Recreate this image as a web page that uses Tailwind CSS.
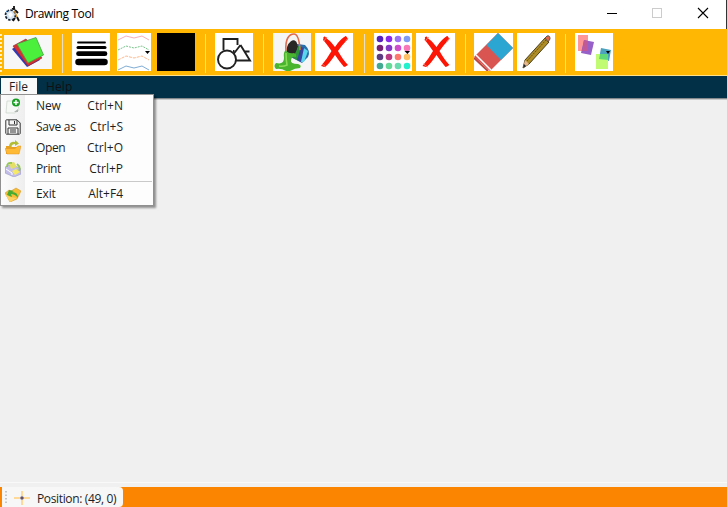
<!DOCTYPE html>
<html lang="en">
<head>
<meta charset="utf-8">
<title>Drawing Tool</title>
<script src="https://cdn.jsdelivr.net/npm/@tailwindcss/browser@4"></script>
</head>
<body class="w-[727px] h-[507px] overflow-hidden bg-[#f0f0f0] font-['Open_Sans','Noto_Sans',sans-serif] text-[12px] text-[#1e1e1e]">
<svg class="hidden">
  <symbol id="cross" viewBox="0 0 38 38">
    <path d="M9 4Q14 6 20 14Q25 6 31 3L33 6Q27 12 23 18Q28 27 33 32L29 34Q24 28 20 22Q14 31 10 34L6 33Q12 26 16.500 18Q11 10 8 7Z" fill="#fc1505"/>
    <path d="M9 4L18 15M31 4L22 14M8 33L17 22M31 33L22 22" stroke="#fc1505" stroke-width="2" fill="none"/>
    <path d="M12 4L9 8M33 5L30 9M7 31L11 34" stroke="#ff7468" stroke-width="1" fill="none"/>
  </symbol>
</svg>
<div class="flex flex-col w-full h-full">
  <header class="flex items-center h-[29px] shrink-0 bg-white border-r border-[#333]">
    <svg class="w-4 h-[18px] ml-[4px] mb-[2px]" viewBox="0 0 16 18" fill="none">
      <circle cx="6.500" cy="10" r="5" fill="#d5e4f1" stroke="#172536" stroke-width="1.700" stroke-dasharray="2.500 1.300"/>
      <path d="M4 9L7 7L9 10L6 13Z" fill="#fff"/>
      <path d="M10 1V5M11 5L14 8M13 12L15 16M8 4L11 3M11 13L9 16" stroke="#111" stroke-width="1.800"/>
      <path d="M10.500 6L13 12" stroke="#d59330" stroke-width="1.500"/><path d="M1 8L4 5" stroke="#4385c5"/>
    </svg>
    <span class="ml-[5px] w-[80px] whitespace-nowrap text-black tracking-[-0.4px] leading-4 mb-[2px]">Drawing Tool</span>
    <svg class="ml-auto mr-[16px] w-[104px] h-[12px] mb-[3px]" viewBox="0 0 104 12" fill="none">
      <path d="M1 6.500H11" stroke="#000"/><rect x="46.500" y="1.500" width="9" height="9" stroke="#ccc"/>
      <path d="M92 1L102 11M102 1L92 11" stroke="#000" stroke-width="1.100"/>
    </svg>
  </header>

  <div class="flex items-start h-[47px] shrink-0 bg-[#ffb703] border-b border-[#ffe08a] pt-1 overflow-hidden">
    <svg class="w-[2px] h-[38px] mt-px shrink-0" viewBox="0 0 2 38"><path d="M1 0V38" stroke="#fff0c8" stroke-width="2" stroke-dasharray="2 2"/></svg>
    <svg class="ml-[2px] mt-[2px] w-12 h-[34px] shrink-0 bg-[#f7f7f7]" viewBox="0 0 48 34">
      <path d="M8 14L20 6L36 25L23 32Z" fill="#3039b8"/><path d="M9 11L22 4L38 23L24 31Z" fill="#d83030" stroke="#932929" stroke-width=".6"/>
      <path d="M13 9L32 2.500L39.500 20L24 28Z" fill="#4af03b" stroke="#4a9d46" stroke-width=".8"/>
    </svg>
    <i class="ml-[10px] mt-px w-px h-[39px] shrink-0 bg-[#e9dfc4]"></i>
    <svg class="ml-[9px] w-[38px] h-[38px] shrink-0 bg-white" viewBox="0 0 38 38" stroke="#000" stroke-linecap="round">
      <path d="M6 9.500H33" stroke-width="1.800"/><path d="M6 14.500H33" stroke-width="3"/><path d="M6.500 20.700H33" stroke-width="4.700"/><path d="M6.500 29H32.500" stroke-width="6.500"/>
    </svg>
    <svg class="ml-[7px] w-[34px] h-[38px] shrink-0 bg-white" viewBox="0 0 34 38" fill="none" stroke-width="1">
      <path d="M1 7L9 3L17 5L25 3L32 7" stroke="#f8aebb"/><path d="M1 17L9 13L17 15L25 13L32 17" stroke="#7ac48b" stroke-dasharray="2 1"/><path d="M1 27L9 23L17 25L25 23L32 27" stroke="#ffb98d" stroke-dasharray="3 1"/><path d="M1 37L9 33L17 35L25 33L32 37" stroke="#80add4"/>
      <path d="M28 18H33L30.500 21Z" fill="#000"/>
    </svg>
    <i class="ml-[6px] w-[38px] h-[38px] shrink-0 bg-black"></i>
    <i class="ml-[10px] mt-px w-px h-[39px] shrink-0 bg-[#e9dfc4]"></i>
    <svg class="ml-[9px] w-[38px] h-[38px] shrink-0 bg-white" viewBox="0 0 38 38" fill="none" stroke="#202020" stroke-width="1.900">
      <path d="M8.500 17V6H22.500V12M19.500 18H18"/><circle cx="12" cy="26.500" r="9"/><path d="M25.500 12L35 27.500H21M25.500 12L18.500 21M30 18.500H34.500"/>
    </svg>
    <i class="ml-[10px] mt-px w-px h-[39px] shrink-0 bg-[#e9dfc4]"></i>
    <svg class="ml-[9px] w-[38px] h-[38px] shrink-0 bg-[#f5f5f5]" viewBox="0 0 38 38">
      <path d="M17 10L32 12Q38 18 35 24L29 30L14 22Z" fill="#286fa9"/><path d="M21 12L25 13L21 25L16 22Z" fill="#1b2733"/><path d="M25 13L29 14L24 27L20 25Z" fill="#2b9438"/><path d="M28 14L32 15L28 29L24 27Z" fill="#37459d"/><path d="M31 15L35 18L31 29L28 29Z" fill="#57d6ee"/>
      <ellipse cx="19" cy="15" rx="5" ry="8" transform="rotate(20 19 15)" fill="#292626"/>
      <path d="M13 18C12 6 16 1 21 1Q26 1 27 17" fill="none" stroke="#e06a4d" stroke-width="1.600"/>
      <path d="M13 17Q15 21 21 20Q24 21 23 24Q19 23 18 27Q17 31 25 31Q29 32 27 35Q22 35 17 38H13Q8 35 3 36Q0 33 3 30Q11 32 11 25Q10 19 13 17Z" fill="#49b42d"/><path d="M13 20Q13 27 14 32Q10 34 6 33" stroke="#8bdd58" fill="none" stroke-width="1.500"/>
    </svg>
    <svg class="ml-[4px] w-[38px] h-[38px] shrink-0 bg-white"><use href="#cross"/></svg>
    <i class="ml-[11px] mt-px w-px h-[39px] shrink-0 bg-[#e9dfc4]"></i>
    <svg class="ml-[9px] w-[38px] h-[38px] shrink-0 bg-white" viewBox="0 0 38 38">
      <circle cx="6" cy="6" r="3.300" fill="#5520be"/><circle cx="15" cy="6" r="3.300" fill="#8928ed"/><circle cx="24" cy="6" r="3.300" fill="#9c72f4"/><circle cx="33" cy="6" r="3.300" fill="#819cf5"/>
      <circle cx="6" cy="15" r="3.300" fill="#762176"/><circle cx="15" cy="15" r="3.300" fill="#8338c8"/><circle cx="24" cy="15" r="3.300" fill="#cf4ccc"/><circle cx="33" cy="15" r="3.300" fill="#fa77ba"/>
      <circle cx="6" cy="24" r="3.300" fill="#5b3d80"/><circle cx="15" cy="24" r="3.300" fill="#ba3a83"/><circle cx="24" cy="24" r="3.300" fill="#ff786e"/><circle cx="33" cy="24" r="3.300" fill="#ffc064"/>
      <circle cx="6" cy="33" r="3.300" fill="#43a991"/><circle cx="15" cy="33" r="3.300" fill="#65da96"/><circle cx="24" cy="33" r="3.300" fill="#68dcae"/><circle cx="33" cy="33" r="3.300" fill="#22f1cd"/>
      <path d="M30.500 18H36L33.500 21Z" fill="#000"/>
    </svg>
    <svg class="ml-[4px] w-[39px] h-[38px] shrink-0 bg-white"><use href="#cross"/></svg>
    <i class="ml-[10px] mt-px w-px h-[39px] shrink-0 bg-[#e9dfc4]"></i>
    <svg class="ml-[8px] w-[39px] h-[38px] shrink-0 bg-white" viewBox="0 0 39 38">
      <path d="M0 24L24 0L39 15L16 38Z" fill="#d95551"/><path d="M12.500 12L24 0L39 15L27 27Z" fill="#2ba6d3"/><path d="M2 22L17 37" stroke="#fff" stroke-width="1.500"/><path d="M0 25L14 38" stroke="#bd463f" stroke-width="2"/>
    </svg>
    <svg class="ml-[4px] w-[38px] h-[38px] shrink-0 bg-white" viewBox="0 0 38 38">
      <path d="M8 27L28 5L32 9L12 31L6 35Z" fill="#ae8d25" stroke="#4b4025" stroke-width="1"/><path d="M10 28L29 7" stroke="#69511a" stroke-width="1" stroke-dasharray="2 1"/><path d="M8 27L12 31L6 35Z" fill="#e7b88e"/><path d="M7 31L9 33L6 35Z" fill="#222"/><path d="M28 5L30 3Q33 2 33 6L31 9Z" fill="#df654b" stroke="#5a554c"/>
    </svg>
    <i class="ml-[10px] mt-px w-px h-[39px] shrink-0 bg-[#e9dfc4]"></i>
    <svg class="ml-[9px] w-[38px] h-[38px] shrink-0 bg-white" viewBox="0 0 38 38">
      <path d="M3 2H13V18H3Z" fill="#ff9797"/><path d="M9 7L19 9L16 22L6 20Z" fill="#9660c8"/><path d="M9 7L13 8V18H7Z" fill="#c05995"/><path d="M26 15L36 17L34 28L24 26Z" fill="#4ba2be"/><path d="M21 21H33V36H21Z" fill="#c0fb73"/><path d="M25 21H33V27L24 26Z" fill="#60da79"/><path d="M31 18H35L33 21Z" fill="#000"/>
    </svg>
  </div>

  <nav class="relative z-10 flex items-start h-[22px] shrink-0 bg-[#023047] shadow-[0_1px_0_#83898d,0_2px_0_#c9c9c9]">
    <div class="ml-px mt-[2px] w-[36px] h-[20px] bg-[#f9f9f9] pl-2 leading-[18px]">File</div>
    <div class="ml-[9px] mt-[2px] w-[32px] leading-[18px] tracking-[.1px] text-[#101010]">Help</div>
    <div class="absolute left-0 top-[18px] w-[154px] h-[112px] flex bg-[#fdfdfd] border border-[#909090] shadow-[2px_2px_2px_#0006]">
      <div class="w-6 shrink-0 flex flex-col items-center bg-gradient-to-r from-[#fcfcfc] to-[#eee] pt-[3px]">
        <svg class="w-4 h-4 shrink-0" viewBox="0 0 16 16"><path d="M2 3H12L14 12L10 15H1Z" fill="#f6f8f5" stroke="#c9d2c9" stroke-width=".7"/><path d="M9 14L13 11V14Z" fill="#adb5b0"/><circle cx="11" cy="4.500" r="4" fill="#169c20"/><path d="M8.500 4.500H13.500M11 2V7" stroke="#fff" stroke-width="1.400"/></svg>
        <svg class="mt-[5px] w-4 h-4 shrink-0" viewBox="0 0 16 16" fill="none" stroke="#333"><path d="M.8 1.500Q.8.8 1.500.8H12L15.200 4V14.500L14.500 15.200H1.500L.8 14.500ZM4 1V6H12V1M9.500 2V5M3 15V9H13V15M5 11H11M5 13H11"/></svg>
        <svg class="mt-[5px] w-4 h-4 shrink-0" viewBox="0 0 16 16"><path d="M1 6H6L7 7H14V14H1Z" fill="#e8a020"/><path d="M4 6Q5 1 10 2V0L14 3.500L10 6V4Q7 4 6 7" fill="#b2bd35"/><path d="M0 8.500H10L13 6H16L14 14H2Z" fill="#ffba35" stroke="#dc9125" stroke-width=".5"/></svg>
        <svg class="mt-[5px] w-4 h-4 shrink-0" viewBox="0 0 16 16"><path d="M0 6L7 3L16 8V13L9 16L0 12Z" fill="#c2bee9" stroke="#9a98c9" stroke-width=".6"/><path d="M4 2L9 1L12 6L6 8Z" fill="#e4df65"/><path d="M2 6Q2 1 7 2M12 3Q16 6 14 10" fill="none" stroke="#93c653" stroke-width="1.800"/><path d="M7 10L11 8L15 11L10 14Z" fill="#f6e965"/><path d="M1 8L7 12V14" stroke="#fff" fill="none"/></svg>
        <svg class="mt-[9px] w-4 h-4 shrink-0" viewBox="0 0 16 16"><path d="M0 7L4 4L6 5L11 2L16 5L12 13L5 16Z" fill="#f6bd35" stroke="#ce9027" stroke-width=".5"/><path d="M2 9L4 4L9 5L7 6Q13 6 13 12Q10 8 6 8L7 11Z" fill="#45ab32"/><path d="M0 8L5 11L12 12L5 16Z" fill="#ffd363"/></svg>
      </div>
      <div class="flex-1 pl-[11px] tracking-[-.12px] leading-[21px]">
        <div class="flex justify-between pr-[30px] h-[21px]"><span>New</span><span class="tracking-normal">Ctrl+N</span></div>
        <div class="flex justify-between pr-[30px] h-[21px]"><span class="tracking-[-.25px]">Save as</span><span class="tracking-normal">Ctrl+S</span></div>
        <div class="flex justify-between pr-[30px] h-[21px]"><span class="tracking-[-.35px]">Open</span><span class="tracking-normal">Ctrl+O</span></div>
        <div class="flex justify-between pr-[30px] h-[21px]"><span class="tracking-[-.35px]">Print</span><span class="tracking-normal">Ctrl+P</span></div>
        <div class="h-px bg-[#c9c9c9] mt-[2px] mb-px -ml-[3px] mr-px"></div>
        <div class="flex justify-between pr-[30px] h-[21px]"><span>Exit</span><span class="tracking-normal">Alt+F4</span></div>
      </div>
    </div>
  </nav>
  <main class="flex-1 bg-[#f0f0f0]"></main>
  <footer class="h-[25px] shrink-0 border-t border-[#f9f9f9] bg-[#f0f0f0] pt-[4px]">
    <div class="h-[20px] bg-[#fb8500] pl-[2px]">
      <div class="w-[121px] h-full flex items-center bg-[#f7f7f7] rounded-r-sm">
        <svg class="ml-[3px] w-[2px] h-[14px]" viewBox="0 0 2 14"><path d="M1 1V14" stroke="#b5b5b5" stroke-width="1.500" stroke-dasharray="1.500 2"/></svg>
        <svg class="ml-[7px] mt-px w-4 h-4" viewBox="0 0 16 16"><path d="M0 8H6M10 8H16M8 1V6M8 10V15" stroke="#ffd998" stroke-width="2"/><circle cx="8" cy="8" r="1.800" fill="#655061"/></svg>
        <span class="ml-[7px] mt-[3px] whitespace-nowrap tracking-[-.36px]">Position: (49, 0)</span>
      </div>
    </div>
  </footer>
</div>
</body>
</html>
